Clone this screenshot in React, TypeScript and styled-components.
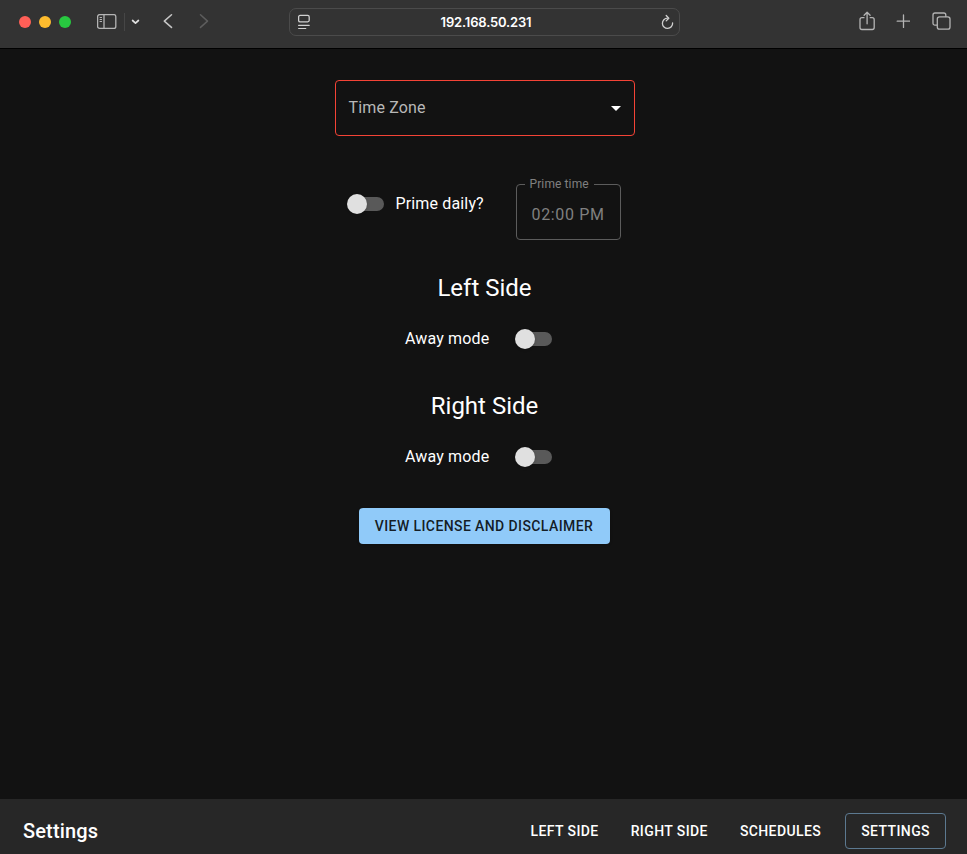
import React from 'react';
import styled, { createGlobalStyle } from 'styled-components';

const GlobalStyle = createGlobalStyle`
  *, *::before, *::after { box-sizing: border-box; }
  body { margin: 0; background: #121212; color: #fff; font-family: Roboto, sans-serif; overflow: hidden; }
  button { font: inherit; color: inherit; background: none; border: 0; padding: 0; margin: 0; }
`;

const Window = styled.div`
  display: flex;
  flex-direction: column;
  height: 854px;
  overflow: hidden;
`;

const Toolbar = styled.header`
  display: grid;
  grid-template-columns: 289px 391px 1fr;
  align-items: start;
  flex: none;
  height: 49px;
  background: #333333;
  border-bottom: 1px solid #000;
  color: #b4b4b4;
`;

const Leading = styled.div`
  display: flex;
  align-items: center;
  height: 44px;
  padding-left: 19px;
`;

const Lights = styled.div`
  display: flex;
  gap: 8px;
`;

const Light = styled.span<{ $color: string }>`
  width: 12px;
  height: 12px;
  border-radius: 50%;
  background: ${(p) => p.$color};
`;

const IconButton = styled.button<{ $gap?: number; $color?: string }>`
  display: flex;
  margin-left: ${(p) => p.$gap ?? 0}px;
  color: ${(p) => p.$color ?? 'inherit'};
`;

const Separator = styled.span`
  width: 1px;
  height: 18px;
  margin: 0 6px 0 7px;
  background: #464646;
`;

const AddressBar = styled.div`
  display: flex;
  align-items: center;
  justify-content: space-between;
  height: 28px;
  margin-top: 8px;
  padding: 0 5px 0 8px;
  border: 1px solid #4b4b4b;
  border-radius: 7px;
  color: #d0d0d0;
`;

const Address = styled.span`
  font: 600 13px/26px Inter, sans-serif;
  letter-spacing: -0.17px;
  color: #fff;
`;

const Trailing = styled.div`
  display: flex;
  align-items: center;
  justify-content: flex-end;
  height: 42px;
  padding-right: 16px;
`;

const Page = styled.main`
  display: flex;
  flex-direction: column;
  align-items: center;
  flex: 1;
  padding: 31px 0 0 2px;
`;

const Select = styled.button`
  display: flex;
  align-items: center;
  justify-content: space-between;
  width: 300px;
  height: 56px;
  padding: 0 6px 0 13px;
  border: 1px solid #f44336;
  border-radius: 4px;
  color: #b8b8b8;
`;

const Placeholder = styled.span`
  padding-bottom: 2px;
  font-size: 16px;
  line-height: 23px;
  letter-spacing: 0.15px;
`;

const PrimeRow = styled.div`
  display: flex;
  align-items: flex-start;
  width: 300px;
  height: 64px;
  margin-top: 41px;
  padding-left: 12px;
`;

const SwitchLabel = styled.label`
  display: flex;
  align-items: center;
  gap: 12px;
  width: 169px;
  height: 54px;
`;

const Label = styled.span`
  font-size: 16px;
  line-height: 24px;
  letter-spacing: 0.15px;
  white-space: nowrap;
`;

const Track = styled.span`
  display: flex;
  align-items: center;
  flex: none;
  width: 34px;
  height: 14px;
  margin-left: 3px;
  border-radius: 7px;
  background: #595959;
`;

const Thumb = styled.span`
  flex: none;
  width: 20px;
  height: 20px;
  margin-left: -3px;
  border-radius: 50%;
  background: #e0e0e0;
  box-shadow: 0 1px 3px rgba(0, 0, 0, 0.2);
`;

const TimeField = styled.fieldset`
  width: 105px;
  height: 62px;
  min-width: 0;
  margin: 1px 0 0;
  padding: 0 0 0 8px;
  border: 1px solid #5c5c5c;
  border-radius: 4px;
  color: #808080;
`;

const Legend = styled.legend`
  height: 12px;
  padding: 0 5px;
  font-size: 12px;
  line-height: 12px;
  letter-spacing: 0.11px;
`;

const TimeValue = styled.div`
  padding: 13px 0 0 7px;
  font-size: 16px;
  line-height: 23px;
  letter-spacing: 0.65px;
  white-space: nowrap;
`;

const Side = styled.section<{ $top: number }>`
  display: flex;
  flex-direction: column;
  align-items: center;
  height: 88px;
  margin-top: ${(p) => p.$top}px;
`;

const Heading = styled.h2`
  margin: 0;
  font-size: 24px;
  font-weight: 400;
  line-height: 32px;
`;

const AwayRow = styled.label`
  display: flex;
  align-items: center;
  justify-content: space-between;
  width: 147px;
  height: 24px;
  margin: 23px 12px 0 0;
`;

const LicenseButton = styled.button`
  width: 251px;
  height: 36px;
  margin: 30px 1px 0 0;
  border-radius: 4px;
  background: #90caf9;
  color: rgba(0, 0, 0, 0.87);
  font-size: 14px;
  font-weight: 500;
  line-height: 24.5px;
  letter-spacing: 0.4px;
  box-shadow: 0 1px 3px rgba(0, 0, 0, 0.2);
`;

const Footer = styled.footer`
  display: flex;
  align-items: center;
  flex: none;
  height: 55px;
  padding: 9px 21px 0 23px;
  background: #272727;
`;

const Title = styled.span`
  flex: 1;
  font-size: 20px;
  font-weight: 500;
  line-height: 32px;
  letter-spacing: 0.15px;
`;

const Nav = styled.nav`
  display: flex;
`;

const NavButton = styled.button<{ $active?: boolean }>`
  height: 36px;
  margin-left: ${(p) => (p.$active ? 8 : 0)}px;
  padding: 0 ${(p) => (p.$active ? 15 : 16)}px;
  border: ${(p) => (p.$active ? '1px solid #5c7990' : '0')};
  border-radius: 4px;
  font-size: 14px;
  font-weight: 500;
  letter-spacing: 0.4px;
  white-space: nowrap;
`;

const Icon = styled.svg`
  display: block;
  fill: none;
  stroke: currentColor;
  stroke-width: 1.3;
  stroke-linecap: round;
  stroke-linejoin: round;
`;

const Switch = () => (
  <Track>
    <Thumb />
  </Track>
);

const AwayMode = ({ title, top }: { title: string; top: number }) => (
  <Side $top={top}>
    <Heading>{title}</Heading>
    <AwayRow>
      <Label>Away mode</Label>
      <Switch />
    </AwayRow>
  </Side>
);

export default function App() {
  return (
    <Window>
      <GlobalStyle />
      <Toolbar>
        <Leading>
          <Lights>
            <Light $color="#ff5f57" />
            <Light $color="#febc2e" />
            <Light $color="#28c840" />
          </Lights>
          <IconButton $gap={26} aria-label="Sidebar">
            <Icon width="20" height="16" viewBox="0 0 20 16">
              <rect x="0.6" y="0.6" width="18.2" height="13.8" rx="2" />
              <path d="M7 .7v13.7" />
              <path d="M3 3.5h1.6M3 5.5h1.6M3 7.5h1.6" strokeWidth="1" />
            </Icon>
          </IconButton>
          <Separator />
          <IconButton aria-label="Tab groups" $color="#e0e0e0">
            <Icon width="9" height="6" viewBox="0 0 9 6">
              <path d="M1.6 1.5 4.5 4.1l2.9-2.6" strokeWidth="1.7" />
            </Icon>
          </IconButton>
          <IconButton $gap={23} aria-label="Back" $color="#c6c6c6">
            <Icon width="10" height="16" viewBox="0 0 10 16">
              <path d="M8.5 .8 1.3 7.1 8.5 13.4" strokeWidth="1.5" />
            </Icon>
          </IconButton>
          <IconButton $gap={26} aria-label="Forward" $color="#5d5d5d">
            <Icon width="10" height="16" viewBox="0 0 10 16">
              <path d="M1.5 .8 8.5 7.1 1.5 13.4" strokeWidth="1.5" />
            </Icon>
          </IconButton>
        </Leading>
        <AddressBar>
          <Icon width="13" height="16" viewBox="0 0 13 16">
            <rect x="0.6" y="1.4" width="10.6" height="6.4" rx="1.5" />
            <path d="M.6 11.4h10.6M.6 14.5h7.2" strokeWidth="1.1" />
          </Icon>
          <Address>192.168.50.231</Address>
          <Icon width="13" height="16" viewBox="0 0 13 16">
            <path d="M6.5 4.2A5.1 5.1 0 1 0 11.6 9" />
            <path d="M5.2 1.5 7.8 4.2 5.2 6.9" />
          </Icon>
        </AddressBar>
        <Trailing>
          <IconButton aria-label="Share">
            <Icon width="16" height="20" viewBox="0 0 16 20">
              <path d="M5 6.7H3A2 2 0 0 0 1 8.7v7.8a2 2 0 0 0 2 2h10.2a2 2 0 0 0 2-2V8.7a2 2 0 0 0-2-2h-2" />
              <path d="M8.1 12.8V1.3M5.1 4.2l3-2.9 3 2.9" />
            </Icon>
          </IconButton>
          <IconButton $gap={21} aria-label="New tab">
            <Icon width="14" height="14" viewBox="0 0 14 14">
              <path d="M7.5 .9v12.6M1.2 7.2h12.6" />
            </Icon>
          </IconButton>
          <IconButton $gap={22} aria-label="Tab overview">
            <Icon width="19" height="18" viewBox="0 0 19 18">
              <rect x="5.3" y="4.8" width="12.7" height="12.4" rx="2.2" />
              <path d="M5.2 13.2H3a2 2 0 0 1-2-2V3a2 2 0 0 1 2-2h8.8a2 2 0 0 1 2 2v1.6" />
            </Icon>
          </IconButton>
        </Trailing>
      </Toolbar>

      <Page>
        <Select>
          <Placeholder>Time Zone</Placeholder>
          <Icon width="24" height="24" viewBox="0 0 24 24">
            <path d="M7 10l5 5 5-5z" fill="#fff" stroke="none" />
          </Icon>
        </Select>
        <PrimeRow>
          <SwitchLabel>
            <Switch />
            <Label>Prime daily?</Label>
          </SwitchLabel>
          <TimeField>
            <Legend>Prime time</Legend>
            <TimeValue>02:00 PM</TimeValue>
          </TimeField>
        </PrimeRow>
        <AwayMode title="Left Side" top={31} />
        <AwayMode title="Right Side" top={30} />
        <LicenseButton>VIEW LICENSE AND DISCLAIMER</LicenseButton>
      </Page>

      <Footer>
        <Title>Settings</Title>
        <Nav>
          <NavButton>LEFT SIDE</NavButton>
          <NavButton>RIGHT SIDE</NavButton>
          <NavButton>SCHEDULES</NavButton>
          <NavButton $active>SETTINGS</NavButton>
        </Nav>
      </Footer>
    </Window>
  );
}
